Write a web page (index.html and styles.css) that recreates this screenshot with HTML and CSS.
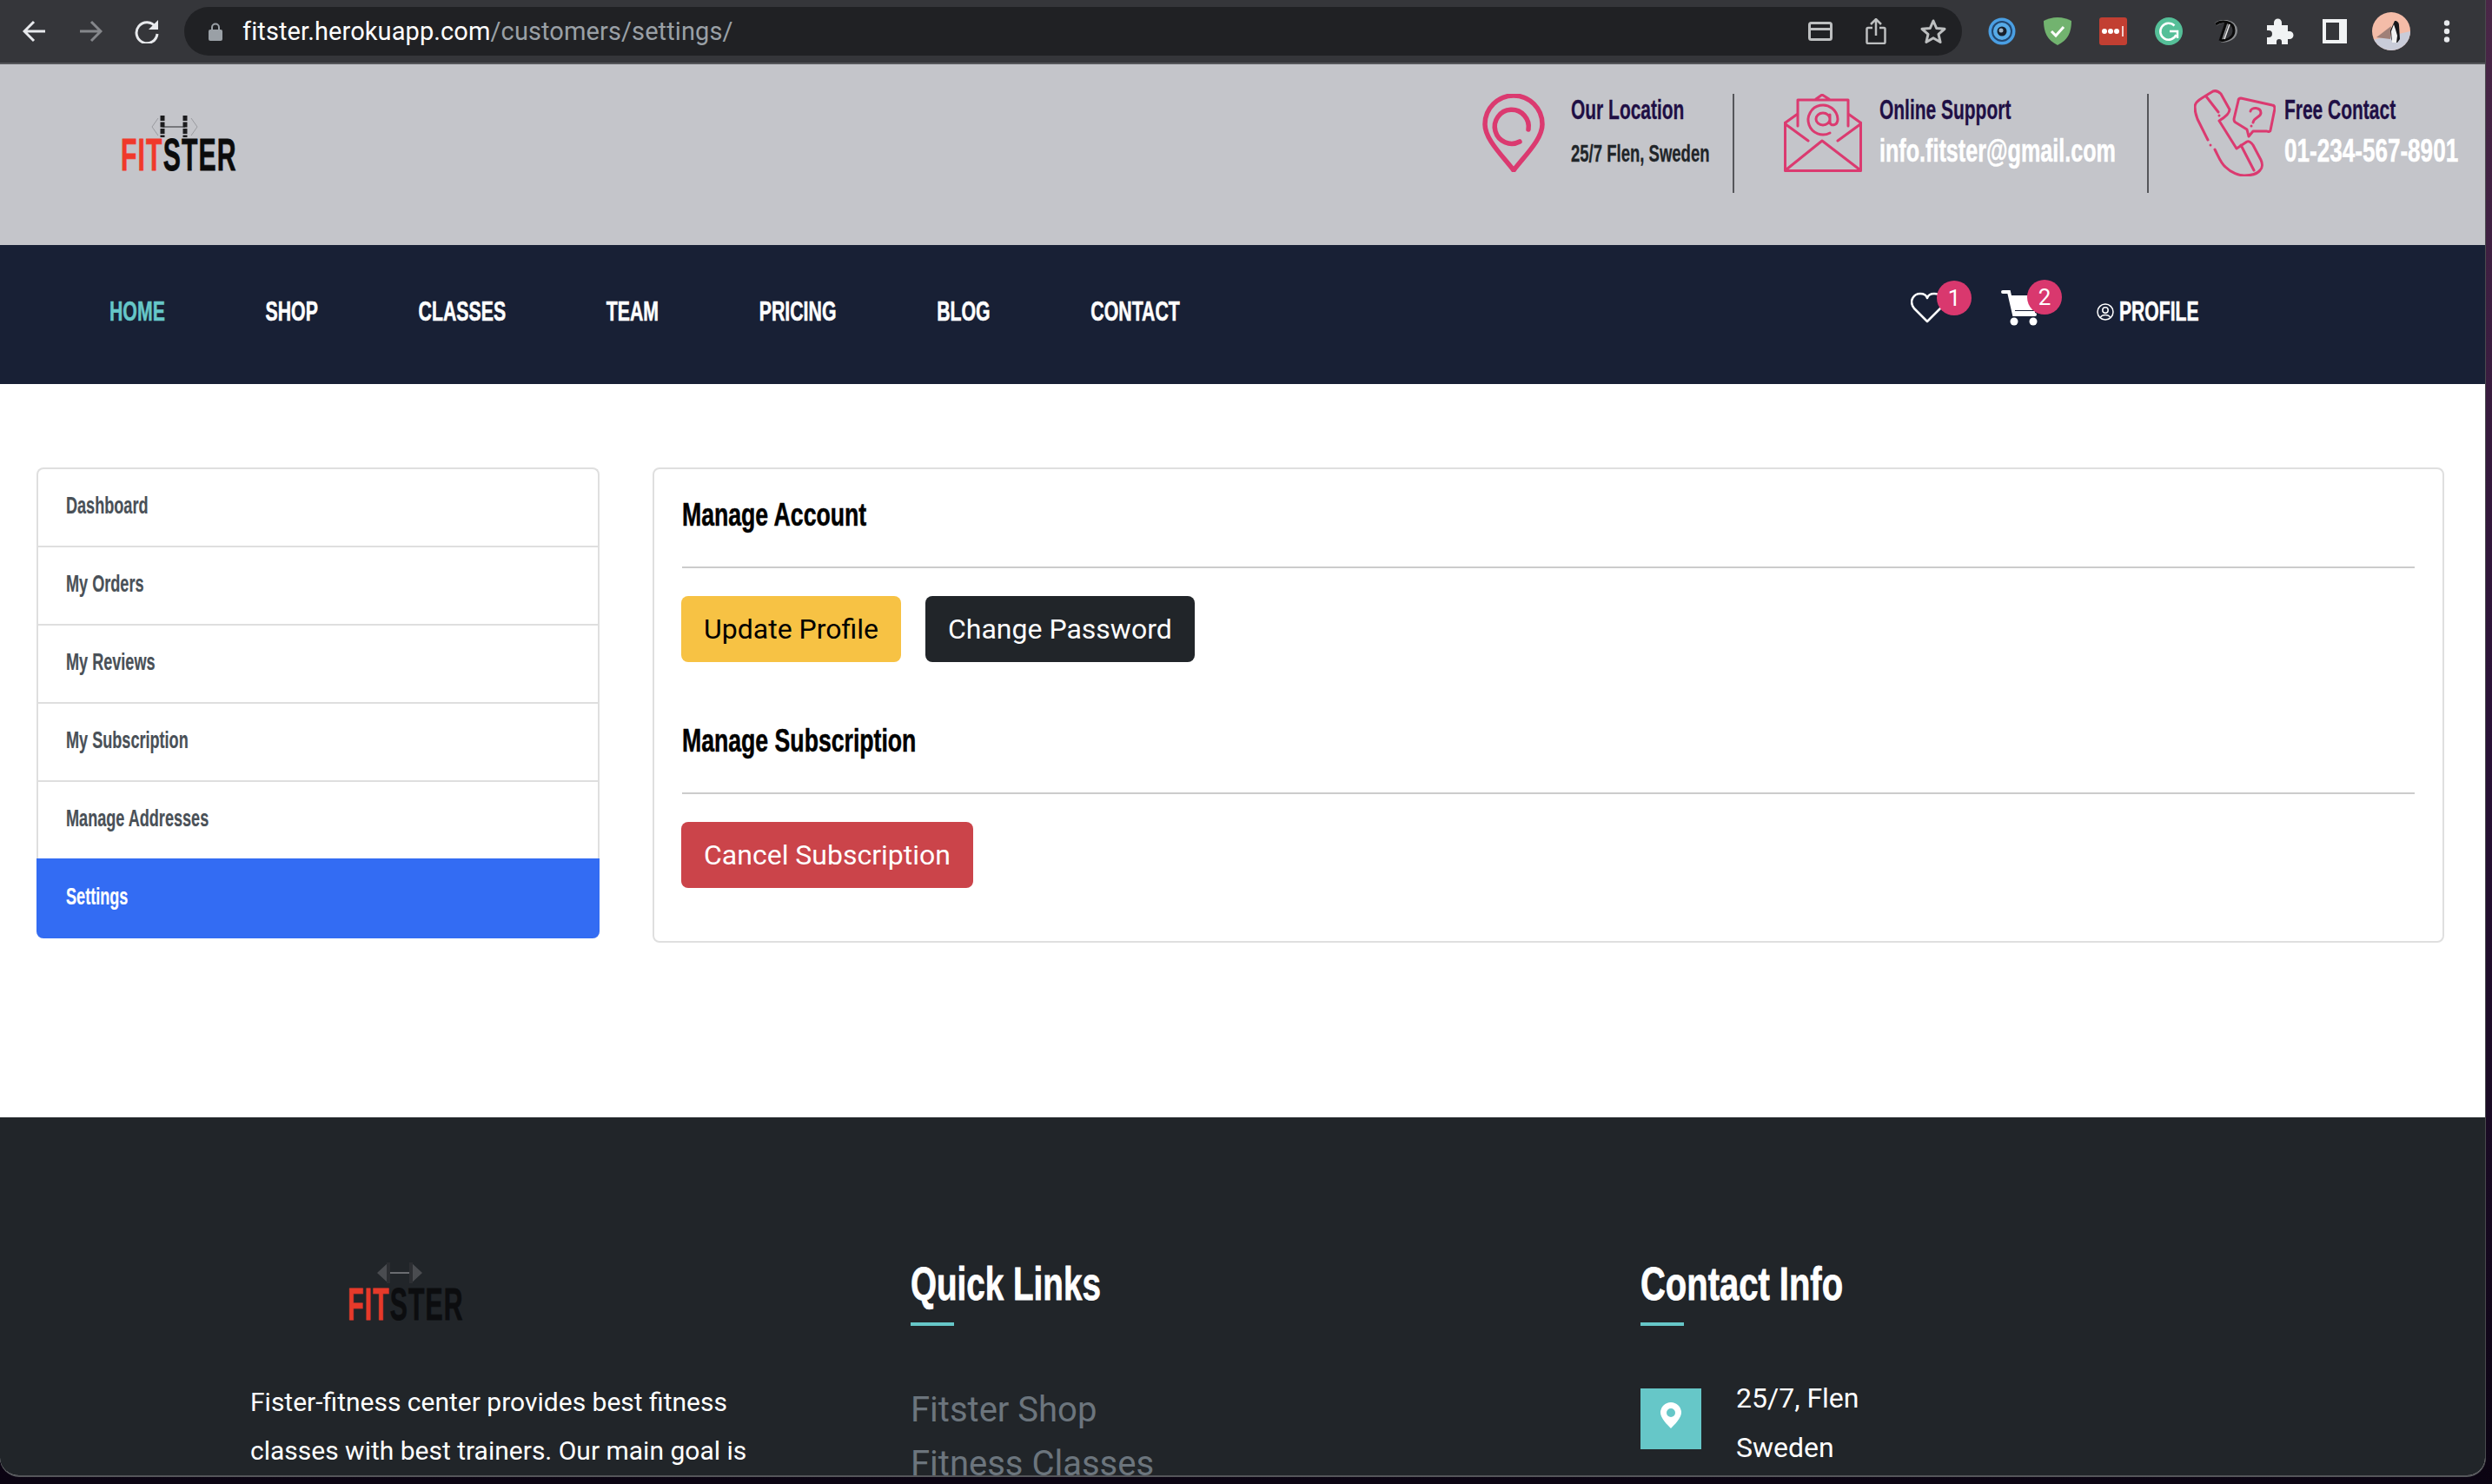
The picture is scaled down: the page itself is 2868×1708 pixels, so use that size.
FILE: index.html
```html
<!DOCTYPE html>
<html lang="en">
<head>
<meta charset="utf-8">
<title>Fitster</title>
<link rel="stylesheet" href="styles.css">
</head>
<body>
<div class="window">
  <div class="toolbar">
    <div class="tool-group">
      <svg class="ic" width="28" height="28" viewBox="0 0 28 28"><path d="M26 14H3M13 3 2 14l11 11" fill="none" stroke="#e8eaed" stroke-width="3"/></svg>
      <svg class="ic" width="28" height="28" viewBox="0 0 28 28"><path d="M2 14h23M15 3l11 11-11 11" fill="none" stroke="#85878b" stroke-width="3"/></svg>
      <svg class="ic" width="30" height="28" viewBox="0 0 30 28"><path d="M25 9a12 12 0 1 0 2 8" fill="none" stroke="#e8eaed" stroke-width="3"/><path d="M28 1v11H17z" fill="#e8eaed"/></svg>
    </div>
    <div class="omnibox">
      <svg width="16" height="21" viewBox="0 0 16 21"><path d="M4 9V5.500a4 4 0 0 1 8 0V9" fill="none" stroke="#9aa0a6" stroke-width="2"/><rect y="8" width="16" height="13" rx="2" fill="#9aa0a6"/></svg>
      <span class="url"><span class="url-host">fitster.herokuapp.com</span>/customers/settings/</span>
      <span class="omni-icons">
        <svg width="28" height="22" viewBox="0 0 28 22"><rect x="1.500" y="1.500" width="25" height="19" rx="2" fill="none" stroke="#bdbfc0" stroke-width="3"/><path d="M2 8.500h24" stroke="#bdbfc0" stroke-width="3"/></svg>
        <svg width="24" height="30" viewBox="0 0 24 30"><path d="M8 11H3a1.500 1.500 0 0 0-1.500 1.500v15A1.500 1.500 0 0 0 3 29h18a1.500 1.500 0 0 0 1.500-1.500v-15A1.500 1.500 0 0 0 21 11h-5M12 20V2M6 7l6-6 6 6" fill="none" stroke="#bdbfc0" stroke-width="2.500"/></svg>
        <svg width="32" height="30" viewBox="0 0 32 30"><path d="m16 3 3.700 8.500 9.300.8-7 6.100 2.100 9.100-8.100-4.800-8.100 4.800 2.100-9.100-7-6.100 9.300-.8z" fill="none" stroke="#bdbfc0" stroke-width="3" stroke-linejoin="round"/></svg>
      </span>
    </div>
    <div class="ext-group">
      <svg width="32" height="32" viewBox="0 0 32 32"><circle cx="16" cy="16" r="15.500" fill="#4a9fe3"/><circle cx="16" cy="16" r="12" fill="#23466e"/><circle cx="16" cy="16" r="10" fill="#57abe8"/><circle cx="16" cy="16" r="5.500" fill="#17202c"/><circle cx="15" cy="15" r="2.500" fill="#9fb4c6"/></svg>
      <svg width="32" height="32" viewBox="0 0 32 32"><path d="M16 0c6 0 12 2 16 4 0 13-4 22-16 28C4 26 0 17 0 4c4-2 10-4 16-4z" fill="#72b36f"/><path d="m9 16 5 5 9-10" fill="none" stroke="#fff" stroke-width="3"/></svg>
      <svg width="32" height="32" viewBox="0 0 32 32"><rect width="32" height="32" rx="3" fill="#c23f32"/><circle cx="6" cy="16" r="3" fill="#fff"/><circle cx="13" cy="16" r="3" fill="#fff"/><circle cx="20" cy="16" r="3" fill="#fff"/><path d="M27 10v12" stroke="#fff" stroke-width="1.500"/></svg>
      <svg width="32" height="32" viewBox="0 0 32 32"><circle cx="16" cy="16" r="16" fill="#55bf98"/><path d="M22.500 9.500A9.500 9.500 0 1 0 24.500 20M17 16h9v8" fill="none" stroke="#fff" stroke-width="2.500"/></svg>
      <svg class="ext-d" width="30" height="26" viewBox="0 0 30 26"><path d="M4 5c6-5 22-5 23 7 0 9-9 12-17 12M17 3 10 24" fill="none" stroke="#8b8d90" stroke-width="4"/><path d="M4 5c6-5 21-4 21 7 0 9-8 11-15 12M16 3 9 24" fill="none" stroke="#0a0a0a" stroke-width="3"/><path d="M20 5 14 22" stroke="#e8e8e8" stroke-width="1.500"/></svg>
      <svg width="32" height="30" viewBox="0 0 32 30"><path d="M1 8h8V5a4.500 4.500 0 0 1 9 0v3h7v7h2a4.500 4.500 0 0 1 0 9h-2v6h-7v-3a3 3 0 0 0-6 0v3H1v-8h2a4 4 0 0 0 0-8H1z" fill="#f1f3f4"/></svg>
      <svg width="30" height="28" viewBox="0 0 30 28"><path d="M1 0h28v28H1zM5 4v20h15V4z" fill="#f1f3f4" fill-rule="evenodd"/></svg>
      <svg class="avatar" width="44" height="44" viewBox="0 0 44 44"><defs><clipPath id="av"><circle cx="22" cy="22" r="22"/></clipPath></defs><g clip-path="url(#av)"><rect width="44" height="44" fill="#f4bca8"/><path d="M0 32 44 22v22H0z" fill="#c9ccd9"/><path d="M5 29 22 16l-1 15z" fill="#a08078"/><path d="M26 10c3 0 5 2 5 5l1 16-3 4h-5l-2-4-1-10z" fill="#17171a"/><path d="M25 14l-3 8 1 13h5l1-8-2-7z" fill="#f2f2f2"/></g></svg>
      <svg class="dots" width="8" height="26" viewBox="0 0 8 26"><circle cx="4" cy="3.500" r="3.200" fill="#e8eaed"/><circle cx="4" cy="13" r="3.200" fill="#e8eaed"/><circle cx="4" cy="22.500" r="3.200" fill="#e8eaed"/></svg>
    </div>
  </div>

  <header class="topbar">
    <div class="brand brand-top">
      <svg class="dumbbell" width="54" height="26" viewBox="0 0 54 26"><path d="M8 3 1 13l7 10M46 3l7 10-7 10" fill="none" stroke="#9a9ba0" stroke-width="1"/><path d="M13 13h26" stroke="#77787c" stroke-width="2"/><path d="M13 0v25M39 0v25" stroke="#1c1c1e" stroke-width="5" stroke-dasharray="6 1.500"/></svg>
      <div class="brand-word"><span class="brand-fit">FIT</span>STER</div>
    </div>
    <div class="infos">
      <div class="info info-loc">
        <svg class="info-icon" width="72" height="90" viewBox="0 0 72 90"><path d="M36 88C22 70 3 52 3 35a33 33 0 0 1 66 0c0 17-19 35-33 53z" fill="none" stroke="#db3a70" stroke-width="5.500" stroke-linejoin="round"/><path d="M53 41a19.500 19.500 0 1 0-10 14" fill="none" stroke="#db3a70" stroke-width="5.500" stroke-linecap="round"/></svg>
        <div class="info-text">
          <span class="t-title">Our Location</span>
          <span class="t-small">25/7 Flen, Sweden</span>
        </div>
      </div>
      <div class="info info-mail">
        <svg class="info-icon" width="90" height="90" viewBox="0 0 90 90" fill="none" stroke="#db3a70" stroke-width="3" stroke-linejoin="round" stroke-linecap="round"><path d="M1.500 33v55.500h87V33M2 33l14-10M88 33 74 23M16 37V7h58v30M37 6l7-5 8 5M2 35l26 19M62 54l26-19M3 87l41-33 43 33"/><path d="M53 45a17 17 0 1 1 9-16c0 8-9 9-9 3v-8M53 29a8 7 0 1 1-16 0 8 7 0 0 1 16 0"/></svg>
        <div class="info-text">
          <span class="t-title">Online Support</span>
          <span class="t-big">info.fitster@gmail.com</span>
        </div>
      </div>
      <div class="info info-phone">
        <svg class="info-icon" width="94" height="100" viewBox="-1 -1 94 100" fill="none" stroke="#db3a70" stroke-width="3" stroke-linejoin="round" stroke-linecap="round"><path d="M23 68c5 10 7 16 12 20 7 7 16 10 22 10 8 0 15-2 18-6 3-3 3-8 1-12L67 63c-2-3-5-5-7-4l-12 8L28 35c5-3 12-8 12-13L30 4c-3-3-6-4-9-3L8 9c-5 3-8 6-8 10 0 6 1 9 3 14l12 24M18 63v.1M13 7l14 18M28 29v.1M53 63l15 29"/><path d="m53 9 36 8c2 0 3 2 3 4l-5 25c0 1-2 2-4 1l-16 0-5 6-2-8-13-8c-2-1-2-3-2-4l5-21c0-2 1-3 3-3z"/><path d="M64 24c1-5 12-5 12 2 0 5-8 5-9 11M65 41v.1"/></svg>
        <div class="info-text">
          <span class="t-title">Free Contact</span>
          <span class="t-big t-phone">01-234-567-8901</span>
        </div>
      </div>
    </div>
  </header>

  <nav class="navbar">
    <ul class="nav-links">
      <li class="nav-active">HOME</li>
      <li>SHOP</li>
      <li>CLASSES</li>
      <li>TEAM</li>
      <li>PRICING</li>
      <li>BLOG</li>
      <li>CONTACT</li>
    </ul>
    <div class="nav-tools">
      <span class="tool tool-heart">
        <svg width="38" height="36" viewBox="0 0 38 36"><path d="M19 34 4 19C-3 10 4 2 11 2c4 0 7 2 8 5 1-3 4-5 8-5 7 0 14 8 7 17z" fill="none" stroke="#fff" stroke-width="2.500" stroke-linejoin="round"/></svg>
        <span class="badge">1</span>
      </span>
      <span class="tool tool-cart">
        <svg width="44" height="42" viewBox="0 0 44 42"><path d="M2 2h7l6 26h24" fill="none" stroke="#fff" stroke-width="4" stroke-linecap="round"/><path d="M10 6h32l-4 17H14z" fill="#fff"/><rect x="13" y="24" width="26" height="3" fill="#fff"/><circle cx="15" cy="36" r="4.500" fill="#fff"/><circle cx="37" cy="36" r="4.500" fill="#fff"/></svg>
        <span class="badge">2</span>
      </span>
      <span class="profile">
        <svg width="20" height="20" viewBox="0 0 20 20" fill="none" stroke="#fff" stroke-width="1.500"><circle cx="10" cy="10" r="9"/><circle cx="10" cy="8" r="3.200"/><path d="M4.500 16c2-3.500 9-3.500 11 0"/></svg>
        <span class="profile-label">PROFILE</span>
      </span>
    </div>
  </nav>

  <main class="content">
    <ul class="side">
      <li class="side-item"><span class="side-label">Dashboard</span></li>
      <li class="side-item"><span class="side-label">My Orders</span></li>
      <li class="side-item"><span class="side-label">My Reviews</span></li>
      <li class="side-item"><span class="side-label">My Subscription</span></li>
      <li class="side-item"><span class="side-label">Manage Addresses</span></li>
      <li class="side-item side-active"><span class="side-label">Settings</span></li>
    </ul>
    <section class="panel">
      <h3 class="panel-title"><span>Manage Account</span></h3>
      <hr class="rule">
      <div class="btn-row">
        <a class="btn btn-yellow">Update Profile</a>
        <a class="btn btn-dark">Change Password</a>
      </div>
      <h3 class="panel-title panel-title-2"><span>Manage Subscription</span></h3>
      <hr class="rule">
      <div class="btn-row">
        <a class="btn btn-red">Cancel Subscription</a>
      </div>
    </section>
  </main>

  <footer class="footer">
    <div class="foot-about">
      <div class="brand brand-foot">
        <svg class="dumbbell" width="54" height="26" viewBox="0 0 54 26"><path d="M14 1 1 13l13 12zM40 1l13 12-13 12z" fill="#4a4c50"/><path d="M14 13h26" stroke="#6a6c70" stroke-width="2"/><path d="M14 1v24M40 1v24" stroke="#2c2e32" stroke-width="4"/></svg>
        <div class="brand-word"><span class="brand-fit">FIT</span>STER</div>
      </div>
      <p class="foot-text">Fister-fitness center provides best fitness classes with best trainers. Our main goal is</p>
    </div>
    <div class="foot-links">
      <h4 class="foot-head">Quick Links</h4>
      <div class="foot-bar"></div>
      <a class="foot-link">Fitster Shop</a>
      <a class="foot-link">Fitness Classes</a>
    </div>
    <div class="foot-contact">
      <h4 class="foot-head">Contact Info</h4>
      <div class="foot-bar"></div>
      <div class="address">
        <span class="pin-box">
          <svg width="24" height="30" viewBox="0 0 24 30"><path d="M12 0a12 12 0 0 1 12 12c0 6-8 14-12 18C8 26 0 18 0 12A12 12 0 0 1 12 0zm0 7a5 5 0 1 0 0 10 5 5 0 0 0 0-10z" fill="#fff" fill-rule="evenodd"/></svg>
        </span>
        <div class="address-text">25/7, Flen<br>Sweden</div>
      </div>
    </div>
  </footer>
</div>
</body>
</html>
```
FILE: styles.css
```css
* { box-sizing: border-box; }
html, body { margin: 0; padding: 0; }
body { width: 2868px; height: 1708px; background: linear-gradient(#4a2747, #2a1238 50%, #0b0412); overflow: hidden; font-family: Roboto, "Liberation Sans", sans-serif; }
ul { list-style: none; margin: 0; padding: 0; }
.window { width: 2861px; height: 1700px; overflow: hidden; border-radius: 0 0 22px 22px; border-right: 1px solid #4a4b4e; border-bottom: 2px solid #55565a; background: #fff; }

.toolbar { height: 74px; background: #35363a; border-bottom: 2px solid #55565a; display: flex; align-items: flex-start; }
.tool-group { display: flex; align-items: center; gap: 36px; height: 72px; padding-left: 26px; width: 212px; flex: none; }
.omnibox { width: 2046px; flex: none; height: 56px; margin-top: 8px; background: #202124; border-radius: 28px; display: flex; align-items: center; padding-left: 28px; }
.url { margin-left: 23px; font-size: 29px; letter-spacing: .1px; color: #9aa0a6; white-space: nowrap; }
.url-host { color: #fff; }
.omni-icons { margin-left: auto; display: flex; align-items: center; gap: 38px; padding-right: 17px; }
.ext-group { flex: 1; display: flex; align-items: center; height: 72px; padding-left: 30px; gap: 32px; }
.ext-d { margin-left: 2px; }
.avatar { margin-left: -4px; }
.dots { margin-left: 6px; }

.topbar { height: 208px; background: #c4c5ca; display: flex; justify-content: space-between; padding-left: 139px; }
.brand { padding-top: 59px; }
.dumbbell { display: block; margin-left: 35px; }
.brand-word { margin-top: 1px; font-family: "Liberation Sans Narrow", "Liberation Sans", sans-serif; font-weight: 700; font-size: 52px; line-height: 44px; letter-spacing: 2px; color: #0b0b0b; -webkit-text-stroke: .8px currentColor; transform: scaleX(.58); transform-origin: left top; white-space: nowrap; }
.brand-top .brand-word { margin-top: -3px; }
.brand-fit { color: #f0392b; }
.brand-foot .brand-word { color: #0c0d0f; }
.brand-foot .brand-fit { color: #e63a2a; }
.infos { display: flex; margin-top: 34px; height: 114px; }
.info { display: flex; height: 114px; }
.info-icon { flex: none; }
.info-text { display: flex; flex-direction: column; align-items: flex-start; white-space: nowrap; }
.info-loc { width: 290px; border-right: 2px solid #55565a; }
.info-mail { width: 420px; margin-left: 57px; border-right: 2px solid #55565a; }
.info-phone { width: 335px; margin-left: 52px; margin-top: -5px; }
.info-loc .info-text { margin-left: 30px; }
.info-mail .info-text { margin-left: 20px; }
.info-phone .info-text { margin-left: 10px; }
.t-title, .t-small, .t-big { display: block; font-family: "Liberation Sans Narrow", "Liberation Sans", sans-serif; font-weight: 700; transform-origin: left top; }
.t-title { font-size: 32px; line-height: 36px; color: #1f0f45; transform: scaleX(.655); -webkit-text-stroke: .3px currentColor; }
.t-small { font-size: 27px; line-height: 30px; color: #212529; margin-top: 18px; transform: scaleX(.686); -webkit-text-stroke: .3px currentColor; }
.t-big { font-size: 37px; line-height: 40px; color: #fff; margin-top: 10px; transform: scaleX(.68); -webkit-text-stroke: .5px currentColor; }
.t-phone { transform: scaleX(.705); }
.info-phone .t-title { margin-top: 5px; }

.navbar { height: 160px; background: #182035; display: flex; align-items: center; justify-content: space-between; padding: 0 0 8px 126px; position: relative; }
.nav-links { display: flex; gap: 174px; font-family: "Liberation Sans Narrow", "Liberation Sans", sans-serif; font-weight: 700; font-size: 32px; color: #fff; -webkit-text-stroke: .6px currentColor; transform: scaleX(.665); transform-origin: left center; white-space: nowrap; }
.nav-active { color: #66c7c8; }
.nav-tools { position: absolute; left: 2199px; top: 0; height: 160px; width: 400px; }
.tool { position: absolute; display: block; }
.tool-heart { left: 0; top: 54px; }
.tool-cart { left: 104px; top: 52px; }
.badge { position: absolute; width: 40px; height: 40px; border-radius: 50%; background: #d9386e; color: #fff; font-size: 26px; display: flex; align-items: center; justify-content: center; }
.tool-heart .badge { left: 30px; top: -13px; }
.tool-cart .badge { left: 30px; top: -12px; }
.profile { position: absolute; left: 214px; top: 58px; display: flex; align-items: center; gap: 6px; }
.profile-label { font-family: "Liberation Sans Narrow", "Liberation Sans", sans-serif; font-weight: 700; font-size: 32px; color: #fff; -webkit-text-stroke: .6px currentColor; transform: scaleX(.66); transform-origin: left center; }

.content { height: 844px; padding: 96px 47px 0 42px; display: flex; align-items: flex-start; gap: 61px; }
.side { width: 648px; flex: none; border: 2px solid #dfdfdf; border-bottom: 0; border-radius: 8px; }
.side-item { height: 90px; display: flex; align-items: center; padding: 0 0 4px 32px; border-bottom: 2px solid #dfdfdf; }
.side-label { font-family: "Liberation Sans Narrow", "Liberation Sans", sans-serif; font-weight: 700; font-size: 27px; color: #495057; -webkit-text-stroke: .2px currentColor; transform: scaleX(.67); transform-origin: left center; white-space: nowrap; }
.side-active { background: #336cf3; margin: -2px -2px 0; padding: 0 0 4px 34px; height: 92px; border: 0; border-radius: 0 0 8px 8px; }
.side-active .side-label { color: #fff; }

.panel { flex: 1; height: 547px; border: 2px solid #dfdfdf; border-radius: 8px; padding: 32px 32px 0; }
.panel-title { margin: 0; height: 48px; padding-bottom: 6px; display: flex; align-items: center; font-family: "Liberation Sans Narrow", "Liberation Sans", sans-serif; font-weight: 700; font-size: 36px; color: #000; -webkit-text-stroke: .5px currentColor; }
.panel-title span { transform: scaleX(.74); transform-origin: left center; white-space: nowrap; }
.panel-title-2 { margin-top: 70px; }
.rule { border: 0; height: 2px; background: #ccc; margin: 32px 0 32px; }
.btn-row { display: flex; gap: 28px; margin-left: -1px; }
.btn { height: 76px; display: flex; align-items: center; padding: 0 26px; border-radius: 8px; font-size: 32px; white-space: nowrap; }
.btn-yellow { background: #f7c244; color: #000; }
.btn-dark { background: #212529; color: #fff; }
.btn-red { background: #cb444a; color: #fff; }

.footer { height: 412px; background: #212529; position: relative; display: flex; overflow: hidden; }
.foot-about { position: absolute; left: 288px; top: 0; width: 600px; }
.brand-foot { padding: 166px 0 0 112px; }
.brand-foot .dumbbell { margin-left: 33px; }
.foot-text { margin: 63px 0 0; font-size: 30px; line-height: 56px; color: #fff; }
.foot-links, .foot-contact { position: absolute; top: 0; }
.foot-links { left: 1048px; }
.foot-contact { left: 1888px; }
.foot-head { margin: 0; padding-top: 160px; font-family: "Liberation Sans Narrow", "Liberation Sans", sans-serif; font-weight: 700; font-size: 54px; line-height: 62px; color: #fff; -webkit-text-stroke: .8px currentColor; transform: scaleX(.715); transform-origin: left top; white-space: nowrap; }
.foot-contact .foot-head { transform: scaleX(.74); }
.foot-bar { width: 50px; height: 4px; background: #66c7c8; margin-top: 14px; }
.foot-link { display: block; color: #6c757d; font-size: 40px; line-height: 62px; white-space: nowrap; }
.foot-links .foot-link:nth-of-type(1) { margin-top: 66px; }
.address { display: flex; gap: 40px; margin-top: 72px; }
.pin-box { width: 70px; height: 70px; padding-bottom: 8px; background: #66c7c8; display: flex; align-items: center; justify-content: center; }
.address-text { font-size: 32px; line-height: 57px; color: #fff; margin-top: -17px; white-space: nowrap; }
```
